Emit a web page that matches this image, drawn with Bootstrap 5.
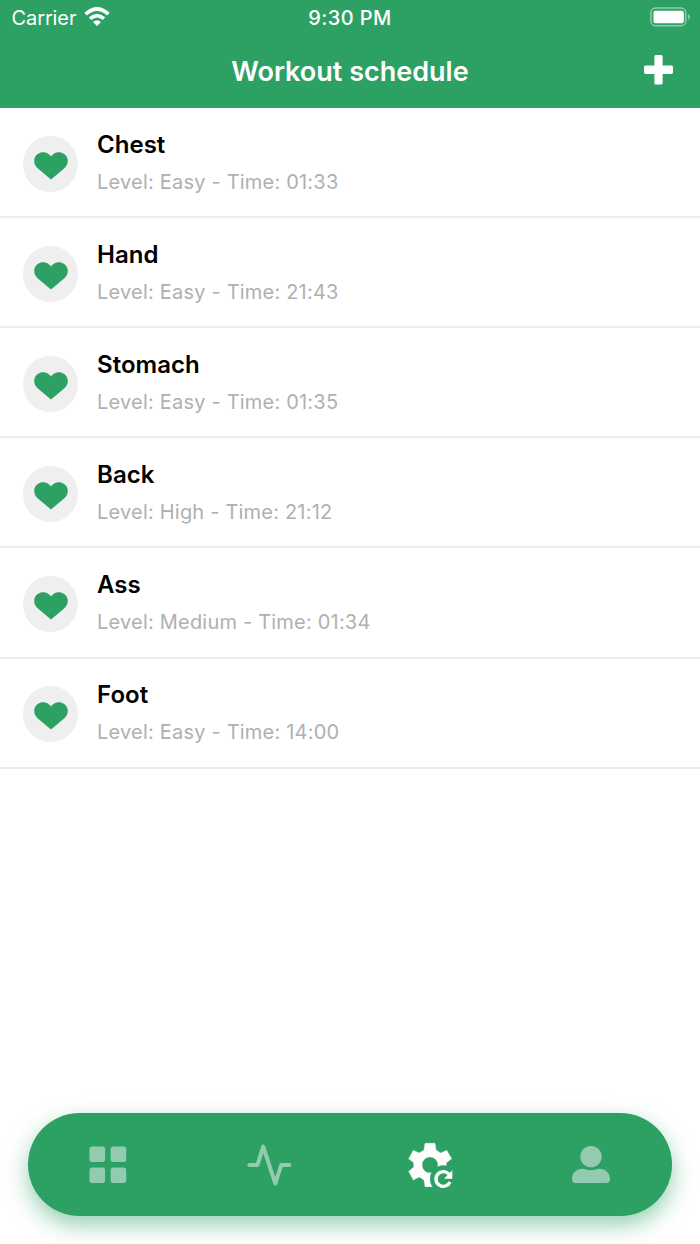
<!DOCTYPE html>
<html lang="en">
<head>
<meta charset="utf-8">
<meta name="viewport" content="width=device-width, initial-scale=1">
<title>Workout schedule</title>
<link href="https://cdn.jsdelivr.net/npm/bootstrap@5.3.0/dist/css/bootstrap.min.css" rel="stylesheet">
<style>
  :root { --brand: #2da164; }
  body { font-family: Inter, "Liberation Sans", sans-serif; color: #000; }
  svg { display: block; flex: none; }
  .app-header { background: var(--brand); height: 108.300px; color: #fff; }
  .status-bar { display: grid; grid-template-columns: 1fr auto 1fr; height: 36px; padding: 0 9px 0 11.500px; font-size: 20px; line-height: 36px; }
  .carrier { letter-spacing: -.1px; }
  .clock { font-weight: 500; letter-spacing: .4px; margin-right: 2.500px; }
  .title-bar { display: grid; grid-template-columns: 1fr auto 1fr; height: 72px; padding: 0 26px; }
  .title-bar h1 { font-size: 27px; line-height: 72px; font-weight: 600; margin: 0; }
  .workout { height: 110.050px; padding: .6px 22.700px 0; border: 0; border-bottom: 2px solid #ededed; }
  .avatar { width: 55.600px; height: 55.600px; background: #efefef; margin-right: 18.800px; margin-top: 2.800px; padding: 3px 0 0 1px; }
  .workout h2 { font-size: 24px; line-height: 30px; font-weight: 600; margin: 0 0 8.800px; }
  .workout p { font-size: 20px; line-height: 26px; color: #b0b0b0; margin: 0; letter-spacing: .2px; }
  .tab-bar { left: 28px; right: 28px; bottom: 28px; height: 103px; border-radius: 52px; padding-right: .4px; background: var(--brand); box-shadow: 0 9px 22px rgba(45,161,100,.5); }
  .tab { color: #92cbaf; }
  .tab.active { color: #fff; }
</style>
</head>
<body class="bg-white vh-100 overflow-hidden position-relative">
<header class="app-header">
  <div class="status-bar">
    <div class="d-flex align-items-center"><span class="carrier">Carrier</span>
      <svg width="26" height="20" viewBox="0 0 26 20" fill="none" stroke="#fff" stroke-width="3.700" style="margin:0 0 2px 7.500px"><path d="M1.600 7.100Q13-3 24.400 7.100M6 11.700Q13 5.600 20 11.700"/><path d="m13 19 4-4.100q-4-3.500-8 0z" fill="#fff" stroke="none"/></svg>
    </div>
    <div class="clock">9:30 PM</div>
    <div class="d-flex align-items-center justify-content-end">
      <svg width="41" height="20" viewBox="0 0 42 20" preserveAspectRatio="none" style="margin-bottom:2px"><rect x=".9" y="1.100" width="35.800" height="17.600" rx="4.800" fill="none" stroke="#92cbaf" stroke-width="1.500"/><rect x="3.500" y="3.800" width="31.200" height="12.500" rx="2.200" fill="#fff"/><path d="M39 7q4 3 0 6z" fill="#92cbaf"/></svg>
    </div>
  </div>
  <div class="title-bar">
    <h1 style="grid-column:2">Workout schedule</h1>
    <div class="d-flex align-items-center justify-content-end">
      <svg width="31" height="30" viewBox="0 0 31 30" style="margin-bottom:5px"><path d="M13 0h5q1.600 0 1.600 1.600v8.900h8.800q1.600 0 1.600 1.600v5.200q0 1.600-1.600 1.600h-8.800v9q0 1.600-1.600 1.600h-5q-1.600 0-1.600-1.600v-9H2.600Q1 18.900 1 17.300v-5.200q0-1.600 1.600-1.600h8.800V1.600Q11.400 0 13 0z" fill="#fff"/></svg>
    </div>
  </div>
</header>

<svg width="0" height="0" class="position-absolute"><defs><symbol id="heart" viewBox="0 0 34 28"><path d="M17 4.500C14.200.300 10.300 0 8.600.200 3.700.700.200 4.300.200 9c0 3.200 1.600 5.500 3.700 7.400L17 27.600l13.100-11.200c2.100-1.900 3.700-4.200 3.700-7.400 0-4.700-3.500-8.300-8.400-8.800-1.700-.200-5.600.100-8.400 4.300z" fill="#2da164"/></symbol></defs></svg>

<main class="list-group list-group-flush">
  <article class="workout d-flex align-items-center"><div class="avatar rounded-circle d-flex align-items-center justify-content-center"><svg width="34" height="28"><use href="#heart"/></svg></div><div><h2>Chest</h2><p>Level: Easy - Time: 01:33</p></div></article>
  <article class="workout d-flex align-items-center"><div class="avatar rounded-circle d-flex align-items-center justify-content-center"><svg width="34" height="28"><use href="#heart"/></svg></div><div><h2>Hand</h2><p>Level: Easy - Time: 21:43</p></div></article>
  <article class="workout d-flex align-items-center"><div class="avatar rounded-circle d-flex align-items-center justify-content-center"><svg width="34" height="28"><use href="#heart"/></svg></div><div><h2>Stomach</h2><p>Level: Easy - Time: 01:35</p></div></article>
  <article class="workout d-flex align-items-center"><div class="avatar rounded-circle d-flex align-items-center justify-content-center"><svg width="34" height="28"><use href="#heart"/></svg></div><div><h2>Back</h2><p>Level: High - Time: 21:12</p></div></article>
  <article class="workout d-flex align-items-center"><div class="avatar rounded-circle d-flex align-items-center justify-content-center"><svg width="34" height="28"><use href="#heart"/></svg></div><div><h2>Ass</h2><p>Level: Medium - Time: 01:34</p></div></article>
  <article class="workout d-flex align-items-center"><div class="avatar rounded-circle d-flex align-items-center justify-content-center"><svg width="34" height="28"><use href="#heart"/></svg></div><div><h2>Foot</h2><p>Level: Easy - Time: 14:00</p></div></article>
</main>

<nav class="tab-bar position-fixed d-flex align-items-center" aria-label="Main">
  <a class="tab flex-fill d-flex justify-content-center" href="#" aria-label="Dashboard"><svg width="48" height="48" viewBox="0 0 48 48" fill="currentColor"><rect x="5.500" y="5.500" width="15.600" height="15.600" rx="2.800"/><rect x="26.600" y="5.500" width="15.600" height="15.600" rx="2.800"/><rect x="5.500" y="26.500" width="15.600" height="15.600" rx="2.800"/><rect x="26.600" y="26.500" width="15.600" height="15.600" rx="2.800"/></svg></a>
  <a class="tab flex-fill d-flex justify-content-center" href="#" aria-label="Activity"><svg width="48" height="48" viewBox="0 0 48 48" fill="none" stroke="currentColor" stroke-width="4" stroke-linecap="round" stroke-linejoin="round"><path d="M4.300 24h8.200L18.200 5.600 30.300 42.500 36.200 24h8.200"/></svg></a>
  <a class="tab active flex-fill d-flex justify-content-center" href="#" aria-label="Schedule"><svg width="48" height="48" viewBox="48 48 144 144"><path fill="currentColor" fill-rule="evenodd" stroke="currentColor" stroke-width="1" stroke-linejoin="round" d="M105 55H135L138 75 152 84 170 76 185 101 169 113V127L185 139 170 165 152 156 138 165 135 185H105L102 165 88 156 70 165 56 139 71 127V113L56 101 70 76 88 84 102 75ZM120 96a24 24 0 1 0 0 48 24 24 0 1 0 0-48Z"/><circle cx="161" cy="162" r="41" fill="#2da164"/><path d="M177 148A22 22 0 1 0 180 171" fill="none" stroke="currentColor" stroke-width="10"/><path d="M187 136V161H162Z" fill="currentColor"/></svg></a>
  <a class="tab flex-fill d-flex justify-content-center" href="#" aria-label="Profile"><svg width="48" height="48" viewBox="0 0 48 48" fill="currentColor"><circle cx="24" cy="15.600" r="10.700"/><path d="M14 28q2-.400 4 .300 6 1.700 12 0 2-.700 4-.300c5.500.300 9 4.700 9 10.300 0 2.500-1.400 3.700-3.300 3.700H8.300C6.400 42 5 40.800 5 38.300 5 32.700 8.500 28.300 14 28z"/></svg></a>
</nav>
<script src="https://cdn.jsdelivr.net/npm/bootstrap@5.3.0/dist/js/bootstrap.bundle.min.js"></script>
</body>
</html>
